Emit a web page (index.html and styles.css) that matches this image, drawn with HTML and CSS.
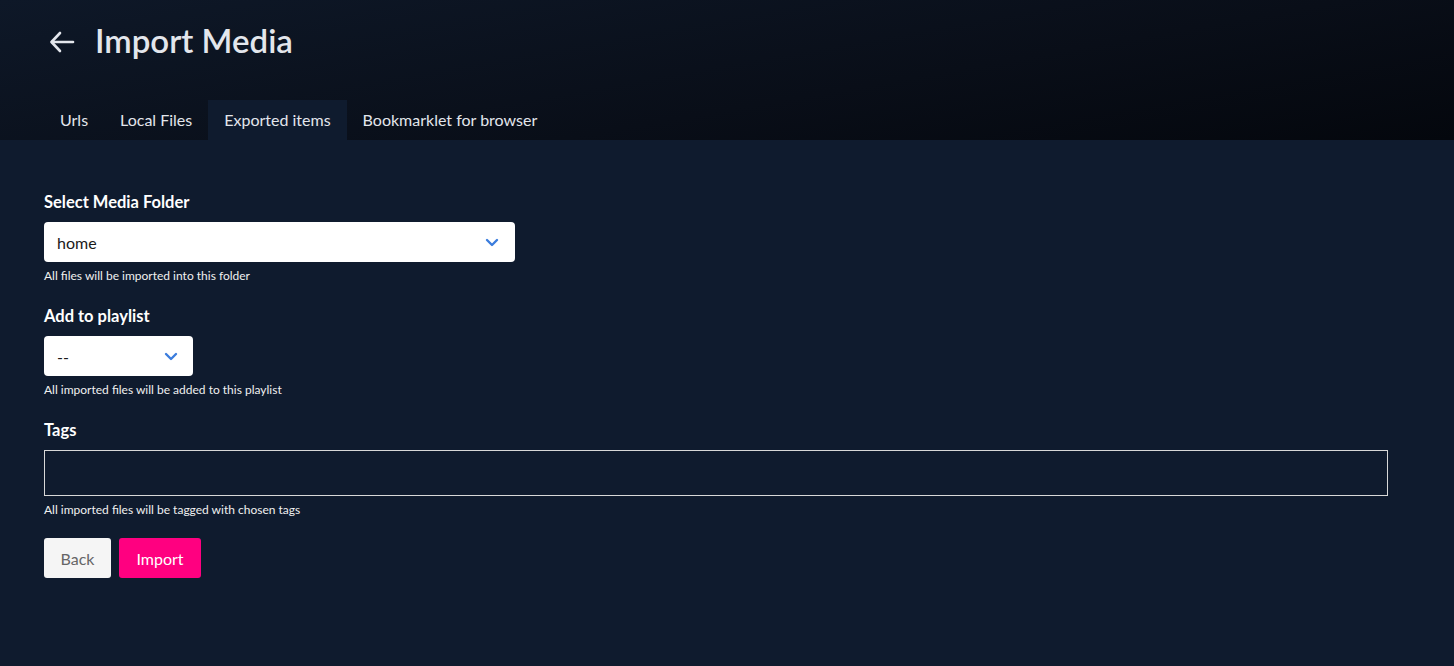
FILE: index.html
```html
<!DOCTYPE html>
<html lang="en">
<head>
    <meta charset="UTF-8">
    <meta name="viewport" content="width=device-width, initial-scale=1.0">
    <title>Import Media</title>
    <link rel="stylesheet" href="styles.css">
</head>
<body>
    <!-- Header -->
    <div class="header">
        <div class="title-row">
            <a class="back-link" href="#">
                <svg width="26" height="22" viewBox="0 0 26 22" fill="none" stroke="#e3e6ec" stroke-width="2.6" stroke-linecap="round" stroke-linejoin="round">
                    <path d="M24 11H3"/>
                    <path d="M11 2L2.5 11L11 20"/>
                </svg>
            </a>
            <h1>Import Media</h1>
        </div>
        <div class="tabs">
            <div class="tab">Urls</div>
            <div class="tab">Local Files</div>
            <div class="tab active">Exported items</div>
            <div class="tab">Bookmarklet for browser</div>
        </div>
    </div>

    <!-- Form -->
    <div class="content">
        <div class="field">
            <label>Select Media Folder</label>
            <div class="select wide">
                <span>home</span>
                <svg class="chevron" width="14" height="9" viewBox="0 0 14 9" fill="none" stroke="#3b7ddd" stroke-width="2.4" stroke-linecap="round" stroke-linejoin="round"><path d="M2 2l5 5 5-5"/></svg>
            </div>
            <div class="help">All files will be imported into this folder</div>
        </div>
        <div class="field">
            <label>Add to playlist</label>
            <div class="select narrow">
                <span>--</span>
                <svg class="chevron" width="14" height="9" viewBox="0 0 14 9" fill="none" stroke="#3b7ddd" stroke-width="2.4" stroke-linecap="round" stroke-linejoin="round"><path d="M2 2l5 5 5-5"/></svg>
            </div>
            <div class="help">All imported files will be added to this playlist</div>
        </div>
        <div class="field">
            <label>Tags</label>
            <div class="tags-input"></div>
            <div class="help">All imported files will be tagged with chosen tags</div>
        </div>
        <div class="buttons">
            <button class="btn btn-back">Back</button>
            <button class="btn btn-import">Import</button>
        </div>
    </div>
</body>
</html>
```
FILE: styles.css
```css
body {
    margin: 0;
    font-family: Lato, "Noto Sans", sans-serif;
    background-color: #0f1b2e;
    color: #ffffff;
    height: 100vh;
}
.header {
    background: linear-gradient(170deg, #0e1828 0%, #090e18 60%, #04070d 100%);
    padding: 0 44px;
}
.title-row {
    display: flex;
    align-items: center;
    height: 80px;
    padding-left: 5px;
}
.back-link {
    display: flex;
    margin-right: 20px;
    margin-top: 4px;
}
.title-row h1 {
    margin: 0;
    font-size: 33px;
    font-weight: 600;
    color: #e3e6ec;
}
.tabs {
    display: flex;
    margin-top: 20px;
}
.tab {
    height: 40px;
    line-height: 40px;
    padding: 0 16px;
    font-size: 16px;
    color: #e3e6ec;
}
.tab.active {
    background-color: #0f1b2e;
}
.content {
    padding: 52px 44px 0;
}
.field {
    margin-bottom: 23px;
}
.field label {
    display: block;
    font-size: 16.5px;
    font-weight: 700;
    margin-bottom: 10px;
}
.select {
    display: flex;
    align-items: center;
    justify-content: space-between;
    box-sizing: border-box;
    height: 40px;
    padding: 0 16px 0 13px;
    background-color: #fff;
    border-radius: 4px;
    color: #1a1a1a;
    font-size: 16px;
}
.select.wide {
    width: 471px;
}
.select.narrow {
    width: 149px;
    padding-right: 15px;
}
.help {
    font-size: 12px;
    margin-top: 6px;
    color: #f0f0f0;
}
.tags-input {
    height: 46px;
    width: 1344px;
    box-sizing: border-box;
    border: 1px solid #d8d8d8;
}
.buttons {
    display: flex;
    gap: 8px;
    margin-top: -2px;
}
.btn {
    height: 40px;
    border: none;
    border-radius: 3px;
    font-family: Lato, "Noto Sans", sans-serif;
    font-size: 16px;
    padding: 0 16.5px;
    cursor: pointer;
}
.btn-back {
    background-color: #f5f5f5;
    color: #666;
}
.btn-import {
    background-color: #ff0080;
    color: #fff;
    padding: 0 17.5px;
}
```
